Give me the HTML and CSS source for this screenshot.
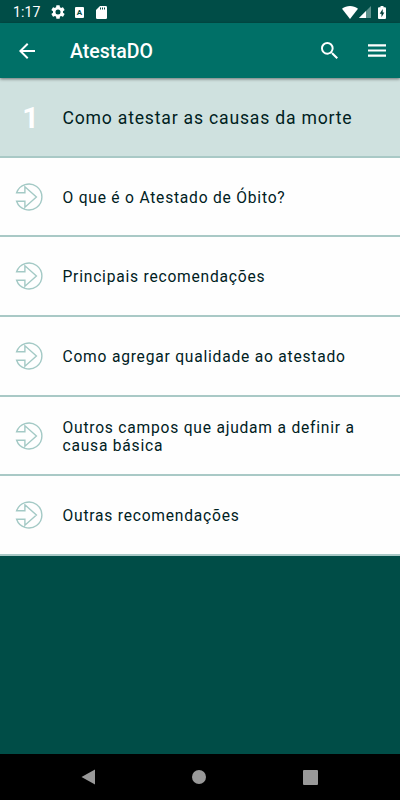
FILE: index.html
```html
<!DOCTYPE html>
<html lang="pt-BR">
<head>
    <meta charset="UTF-8">
    <meta name="viewport" content="width=device-width, initial-scale=1.0">
    <title>AtestaDO</title>
    <link rel="stylesheet" href="styles.css">
</head>
<body>
    <svg class="sprite" width="0" height="0">
        <symbol id="arrow" viewBox="0 0 28 28">
            <path d="M1.6 9.8A13 13 0 1 1 1.6 18.2H9.9V24.2L21.4 14L9.9 3.8V9.8Z"/>
        </symbol>
    </svg>

    <div class="screen">
        <div class="status-bar">
            <span class="clock">1:17</span>
            <svg class="gear" width="14" height="14" viewBox="2 2 20 20"><path fill="#fff" d="M19.14 12.94c.04-.3.06-.61.06-.94s-.02-.64-.07-.94l2.03-1.58a.49.49 0 0 0 .12-.61l-1.92-3.32a.49.49 0 0 0-.59-.22l-2.39.96a7 7 0 0 0-1.62-.94l-.36-2.54a.48.48 0 0 0-.48-.41h-3.84c-.24 0-.43.17-.47.41l-.36 2.54c-.59.24-1.13.57-1.62.94l-2.39-.96a.48.48 0 0 0-.59.22L2.74 8.87c-.12.21-.08.47.12.61l2.03 1.58a6 6 0 0 0 0 1.88l-2.03 1.58a.49.49 0 0 0-.12.61l1.92 3.32c.12.22.37.29.59.22l2.39-.96c.5.38 1.03.7 1.62.94l.36 2.54c.05.24.24.41.48.41h3.84c.24 0 .44-.17.47-.41l.36-2.54a7 7 0 0 0 1.62-.94l2.39.96c.22.08.47 0 .59-.22l1.92-3.32a.49.49 0 0 0-.12-.61l-2.01-1.58zM12 15.6a3.6 3.6 0 1 1 0-7.2 3.6 3.6 0 0 1 0 7.2z"/></svg>
            <span class="keyboard">A</span>
            <svg class="card" width="11" height="13" viewBox="0 0 11 13"><path fill="#fff" d="M4 0h5.8A1.2 1.2 0 0 1 11 1.2v10.6a1.2 1.2 0 0 1-1.2 1.2H1.2A1.2 1.2 0 0 1 0 11.8V4z"/><path stroke="#004d47" d="M4.5 1.5v2M6.5 1.5v2M8.5 1.5v2"/></svg>
            <svg class="wifi" width="16" height="13" viewBox="0 0 16 13"><path fill="#fff" d="M0 2.8C4.7-.8 11.3-.8 16 2.8L8 13z"/></svg>
            <svg class="signal" width="12" height="12" viewBox="0 0 12 12"><path fill="#5c918c" d="M12 0v12H0z"/><path fill="#fff" d="M7 5v7H0z"/></svg>
            <svg class="battery" width="8" height="13" viewBox="0 0 8 13"><path fill="#fff" d="M2.5 0h3v1.2H7a1 1 0 0 1 1 1V12a1 1 0 0 1-1 1H1a1 1 0 0 1-1-1V2.2a1 1 0 0 1 1-1h1.5z"/><path fill="#003c37" d="M4.7 3L1.7 7.8h1.8V11.3L6.3 6.5H4.7z"/></svg>
        </div>

        <div class="app-bar">
            <svg class="back" width="16" height="16" viewBox="4 4 16 16"><path fill="#fff" d="M20 11H7.83l5.59-5.59L12 4l-8 8 8 8 1.41-1.41L7.83 13H20v-2z"/></svg>
            <h1>AtestaDO</h1>
            <svg class="search" width="17" height="17" viewBox="3 3 17.5 17.5"><path fill="#fff" d="M15.5 14h-.79l-.28-.27A6.47 6.47 0 0 0 16 9.5 6.5 6.5 0 1 0 9.5 16c1.61 0 3.09-.59 4.23-1.57l.27.28v.79l5 4.99L20.49 19l-4.99-5zm-6 0a4.5 4.5 0 1 1 0-9 4.5 4.5 0 0 1 0 9z"/></svg>
            <svg class="menu" width="18" height="13" viewBox="0 0 18 13"><path stroke="#fff" stroke-width="2.2" d="M0 1.3h18M0 6.5h18M0 11.7h18"/></svg>
        </div>

        <div class="list">
            <div class="row heading">
                <span class="number">1</span>
                <span class="text">Como atestar as causas da morte</span>
            </div>
            <div class="row">
                <svg class="arrow"><use href="#arrow"/></svg>
                <span class="text">O que é o Atestado de Óbito?</span>
            </div>
            <div class="row">
                <svg class="arrow"><use href="#arrow"/></svg>
                <span class="text">Principais recomendações</span>
            </div>
            <div class="row">
                <svg class="arrow"><use href="#arrow"/></svg>
                <span class="text">Como agregar qualidade ao atestado</span>
            </div>
            <div class="row">
                <svg class="arrow"><use href="#arrow"/></svg>
                <span class="text">Outros campos que ajudam a definir a causa básica</span>
            </div>
            <div class="row">
                <svg class="arrow"><use href="#arrow"/></svg>
                <span class="text">Outras recomendações</span>
            </div>
        </div>

        <div class="nav-bar">
            <svg width="14" height="16" viewBox="0 0 14 16"><path fill="#999" d="M14 .5v15L.5 8z"/></svg>
            <svg width="14" height="14" viewBox="0 0 14 14"><circle cx="7" cy="7" r="7" fill="#999"/></svg>
            <svg width="15" height="15" viewBox="0 0 15 15"><rect width="15" height="15" rx="1" fill="#999"/></svg>
        </div>
    </div>
</body>
</html>
```
FILE: styles.css
```css
body {
    margin: 0;
    font-family: Roboto, "Liberation Sans", sans-serif;
    background: #004d47;
}
.sprite {
    display: block;
}
.screen {
    display: flex;
    flex-direction: column;
    width: 400px;
    height: 800px;
    overflow: hidden;
}
svg {
    flex-shrink: 0;
}
.status-bar {
    display: flex;
    align-items: center;
    box-sizing: border-box;
    height: 23px;
    padding: 1px 14px 0 13px;
    color: #fff;
    background: #004d47;
}
.clock {
    width: 38px;
    font-size: 14px;
    font-weight: 400;
    letter-spacing: 0.1px;
}
.keyboard {
    width: 9px;
    height: 11px;
    margin-left: 10px;
    border-radius: 1px;
    font-size: 8px;
    font-weight: 700;
    line-height: 11px;
    text-align: center;
    color: #004d47;
    background: #fff;
}
.card {
    margin-left: 12px;
}
.wifi {
    margin-left: auto;
}
.signal {
    margin-left: 1px;
}
.battery {
    margin-left: 7px;
}
.app-bar {
    display: flex;
    align-items: center;
    box-sizing: border-box;
    height: 55px;
    padding: 0 14px 0 19px;
    color: #fff;
    background: #007067;
    box-shadow: 0 1px 3px rgba(0, 0, 0, 0.5);
    z-index: 1;
}
.app-bar h1 {
    margin: 0 auto 0 35px;
    padding-top: 2px;
    font-size: 19.5px;
    font-weight: 500;
    line-height: 24px;
}
.menu {
    margin-left: 30px;
}
.list {
    flex: 1;
}
.row {
    display: flex;
    align-items: center;
    box-sizing: border-box;
    height: 79.7px;
    padding: 0 20px 0 15px;
    border-bottom: 2px solid #a9c9c6;
    background: #fefefe;
}
.arrow {
    width: 28px;
    height: 28px;
    fill: none;
    stroke: #a3c9c5;
    stroke-width: 1.4;
}
.text {
    margin-left: 19.5px;
    padding-top: 3px;
    font-size: 15.6px;
    line-height: 18.6px;
    letter-spacing: 0.78px;
    color: #00211e;
}
.heading {
    background: #cfe1df;
}
.heading .text {
    font-size: 17.6px;
    letter-spacing: 0.8px;
}
.number {
    box-sizing: border-box;
    width: 28px;
    padding: 2px 0 0 3px;
    font-size: 29px;
    font-weight: 700;
    text-align: center;
    color: #fff;
}
.nav-bar {
    display: flex;
    align-items: center;
    justify-content: space-between;
    box-sizing: border-box;
    height: 46px;
    padding: 0 82px 0 81px;
    background: #000;
}
```
